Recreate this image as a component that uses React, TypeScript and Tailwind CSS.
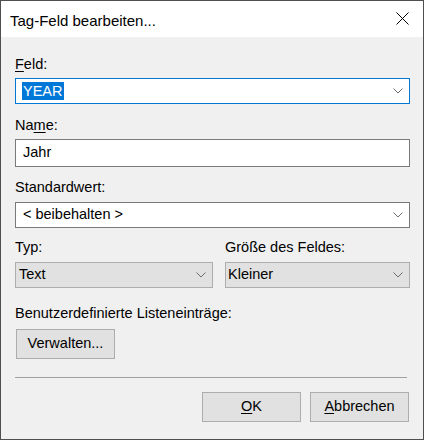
function Chevron({ className = "" }: { className?: string }) {
  return (
    <svg width="10" height="6" viewBox="0 0 10 6" className={className}>
      <polyline points="0.5,0.5 5,5 9.5,0.5" fill="none" stroke="#6d6d6d" strokeWidth="1" />
    </svg>
  );
}

function Label({ children, className = "" }: { children: React.ReactNode; className?: string }) {
  return <div className={`h-[20px] leading-[20px] whitespace-nowrap ${className}`}>{children}</div>;
}

export default function App() {
  return (
    <div className="w-[424px] h-[440px] border border-[#4f4f4f] flex flex-col bg-[#f0f0f0] text-black text-[14.5px] font-['Liberation_Sans',Arial,sans-serif]">
      {/* Title bar */}
      <div className="h-[36px] shrink-0 bg-white flex items-start justify-between pl-[9px] pr-[14px]">
        <div className="mt-[10px] leading-[20px] text-[15px]">Tag-Feld bearbeiten...</div>
        <svg width="13" height="13" viewBox="0 0 13 13" className="mt-[11px]">
          <path d="M0.5 0.5 L12.5 12.5 M12.5 0.5 L0.5 12.5" stroke="#000" strokeWidth="1" />
        </svg>
      </div>

      {/* Body */}
      <div className="flex flex-col pl-[14px] pt-[17px]">
        <Label>
          <u className="underline-offset-2">F</u>eld:
        </Label>
        <div className="mt-[4px] w-[395px] h-[26px] bg-white border border-[#0078d7] flex items-center justify-between pl-[6px] pr-[6px]">
          <span className="bg-[#0078d7] text-white leading-[18px] px-[1px]">YEAR</span>
          <Chevron />
        </div>

        <Label className="mt-[11px]">
          Na<u className="underline-offset-2">m</u>e:
        </Label>
        <div className="mt-[4px] w-[395px] h-[28px] bg-white border border-[#7a7a7a] flex items-center pl-[7px]">
          Jahr
        </div>

        <Label className="mt-[10px]">Standardwert:</Label>
        <div className="mt-[5px] w-[395px] h-[26px] bg-white border border-[#7a7a7a] flex items-center justify-between pl-[7px] pr-[6px]">
          <span>&lt; beibehalten &gt;</span>
          <Chevron />
        </div>

        <div className="mt-[9px] flex gap-[12px]">
          <div className="flex flex-col w-[198px]">
            <Label>Typ:</Label>
            <div className="mt-[5px] h-[26px] bg-[#e1e1e1] border border-[#adadad] flex items-center justify-between pl-[3px] pr-[6px]">
              <span>Text</span>
              <Chevron />
            </div>
          </div>
          <div className="flex flex-col w-[185px]">
            <Label>Größe des Feldes:</Label>
            <div className="mt-[5px] h-[26px] bg-[#e1e1e1] border border-[#adadad] flex items-center justify-between pl-[2px] pr-[6px]">
              <span>Kleiner</span>
              <Chevron />
            </div>
          </div>
        </div>

        <Label className="mt-[15px]">Benutzerdefinierte Listeneinträge:</Label>
        <button className="mt-[6px] ml-[1px] w-[99px] h-[30px] bg-[#e1e1e1] border border-[#adadad] flex items-center justify-center">
          Verwalten...
        </button>

        <div className="mt-[18px] w-[392px] h-px bg-[#a0a0a0]" />

        <div className="mt-[14px] w-[394px] flex justify-end gap-[9px]">
          <button className="w-[99px] h-[30px] bg-[#e1e1e1] border border-[#adadad] flex items-center justify-center">
            <span>
              <u className="underline-offset-2">O</u>K
            </span>
          </button>
          <button className="w-[99px] h-[30px] bg-[#e1e1e1] border border-[#adadad] flex items-center justify-center">
            <span>
              <u className="underline-offset-2">A</u>bbrechen
            </span>
          </button>
        </div>
      </div>
    </div>
  );
}
